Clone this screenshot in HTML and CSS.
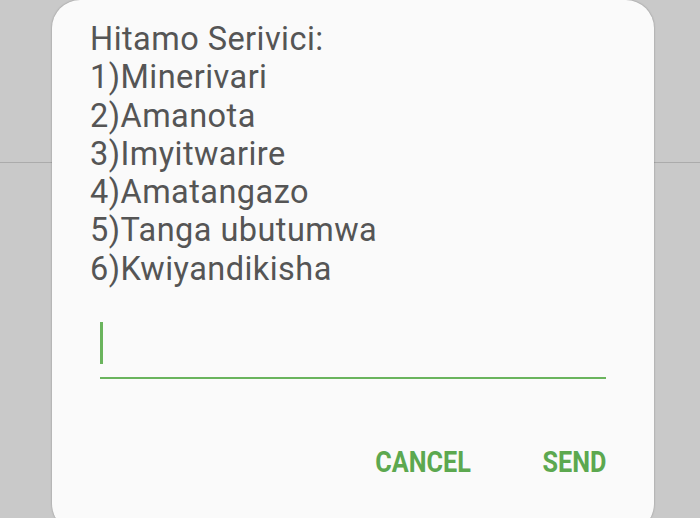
FILE: index.html
```html
<!DOCTYPE html>
<html lang="en">
<head>
  <meta charset="UTF-8"/>
  <meta name="viewport" content="width=device-width,initial-scale=1"/>
  <title>Hitamo Serivici</title>
  <link rel="stylesheet" href="styles.css">
</head>
<body>
  <div class="screen">
    <div class="backdrop-top"></div>
    <div class="dialog">
      <div class="message">
        <div>Hitamo Serivici:</div>
        <div>1)Minerivari</div>
        <div>2)Amanota</div>
        <div>3)Imyitwarire</div>
        <div>4)Amatangazo</div>
        <div>5)Tanga ubutumwa</div>
        <div>6)Kwiyandikisha</div>
      </div>
      <div class="field">
        <span class="caret"></span>
      </div>
      <div class="actions">
        <button class="btn">CANCEL</button>
        <button class="btn">SEND</button>
      </div>
    </div>
  </div>
</body>
</html>
```

FILE: styles.css
```css
* { box-sizing: border-box; }
html, body { margin: 0; height: 100%; overflow: hidden; }
body { background: #c9c9c9; font-family: Roboto, "Noto Sans", sans-serif; }

.screen { position: relative; height: 518px; }
.backdrop-top { height: 163px; border-bottom: 1px solid #ababab; }

.dialog {
  position: absolute; left: 52px; top: 0;
  width: 602px; height: 532px;
  background: #fafafa;
  border-radius: 28px;
  box-shadow: 0 0 2px rgba(0, 0, 0, .35);
  display: flex; flex-direction: column;
}

.message {
  padding: 20px 0 0 38px;
  font-size: 32.5px; line-height: 38.3px;
  letter-spacing: .45px;
  color: #555;
}

.field {
  margin: 33px 48px 0 48px;
  height: 58px;
  border-bottom: 2px solid #6ab45d;
  padding-top: 1px;
}
.caret { display: block; width: 3px; height: 42px; background: #6ab45d; }

.actions {
  display: flex; justify-content: flex-end; gap: 62px;
  padding: 66px 48px 0 0;
}
.btn {
  background: none; border: none; padding: 0;
  font-family: Roboto, sans-serif; font-weight: 700;
  font-size: 29px; color: #5ca84f;
  transform: scaleX(.87); transform-origin: right center;
  cursor: pointer;
}
```
